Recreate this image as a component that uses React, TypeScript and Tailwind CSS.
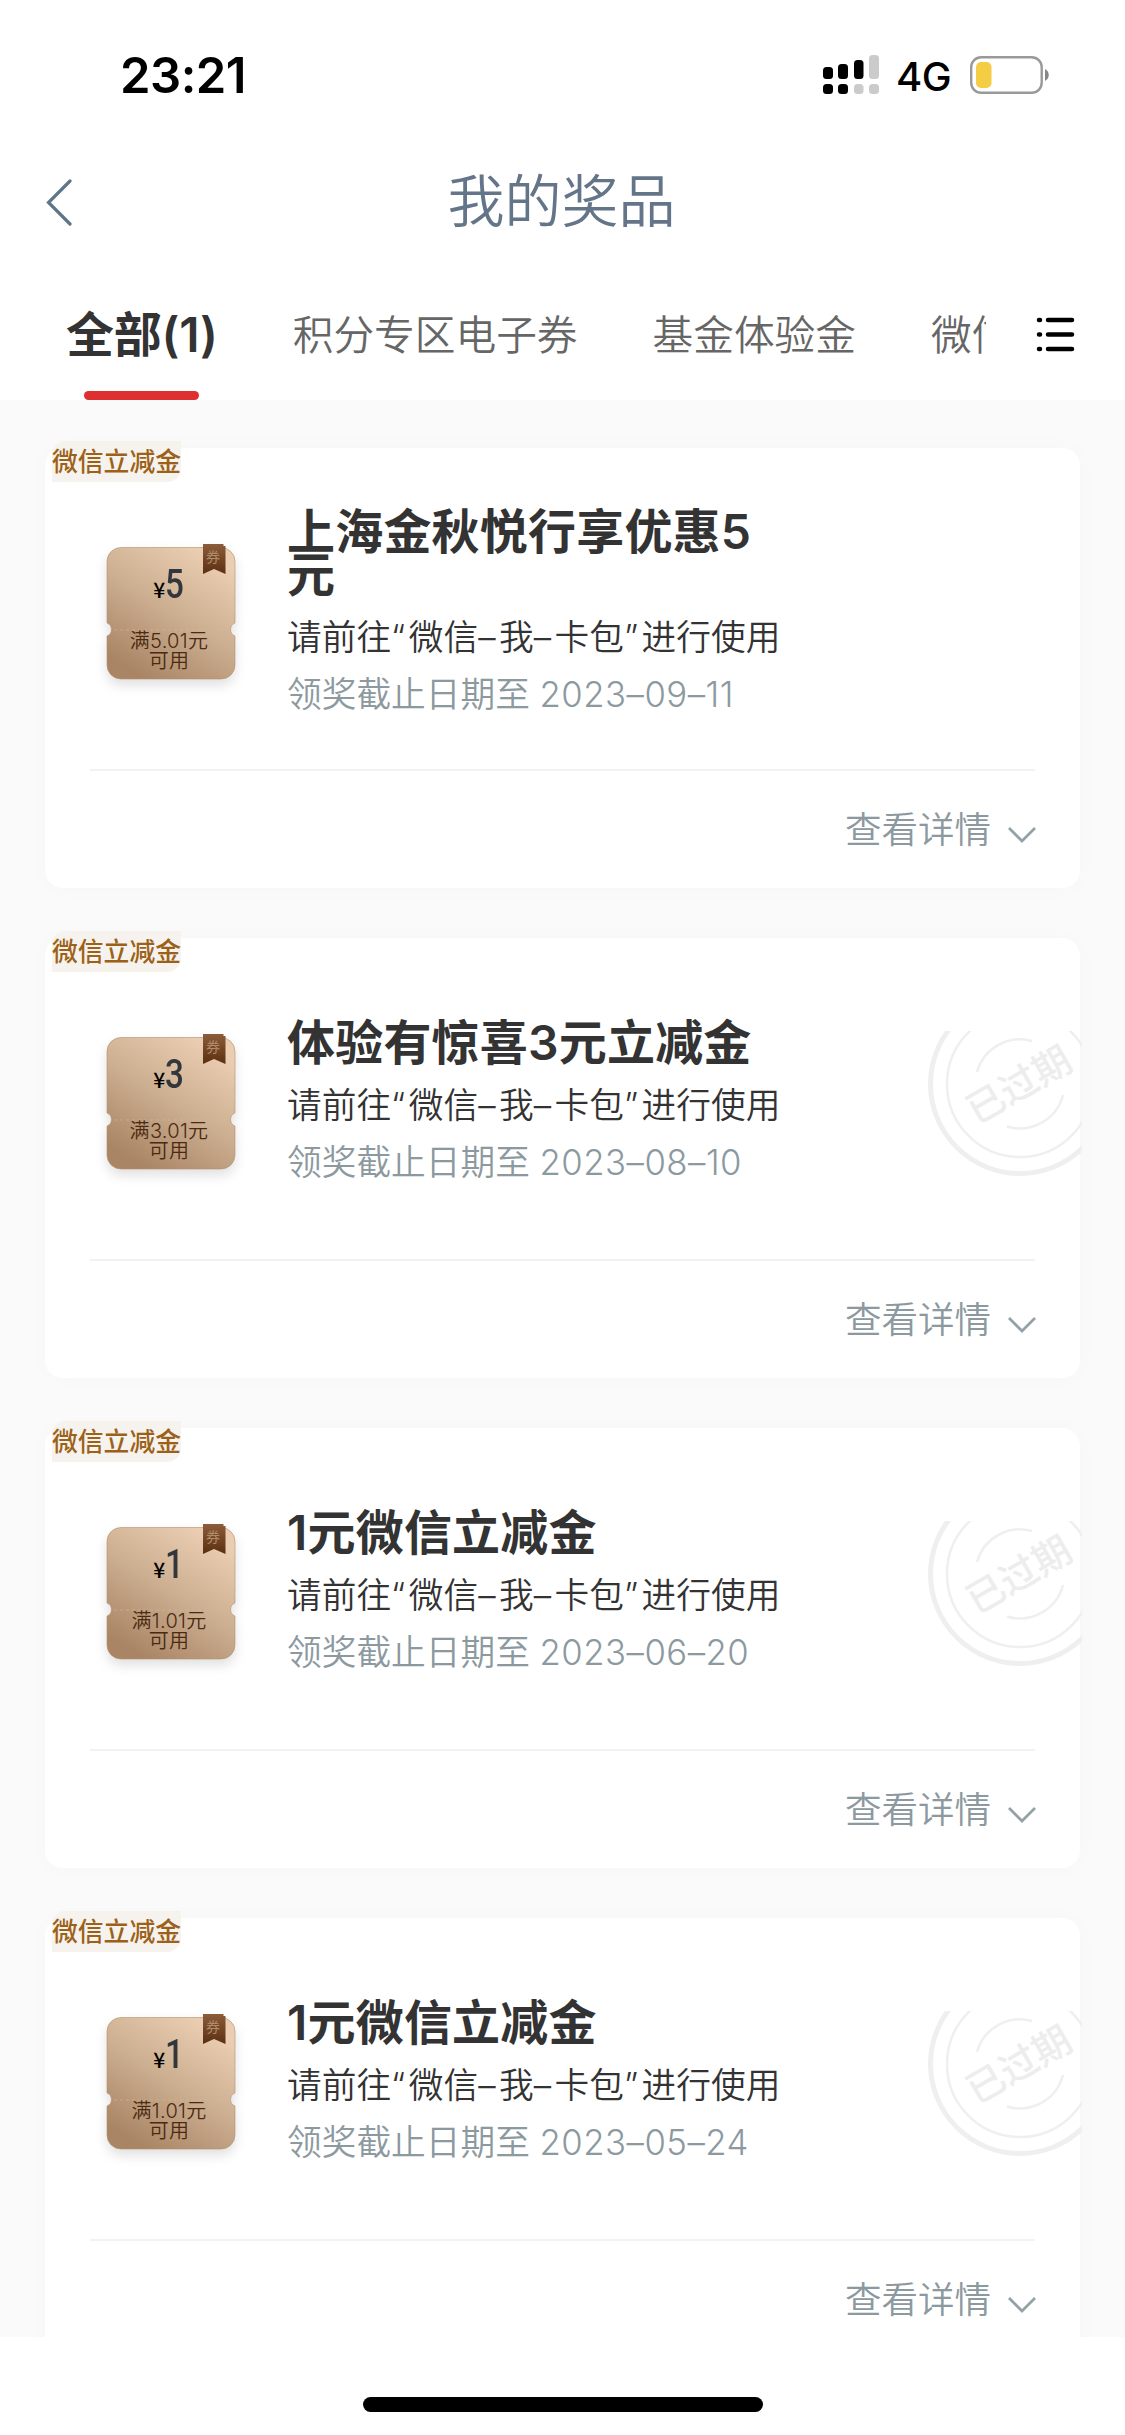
import React, { useState } from 'react';

interface Prize {
    id: number;
    tag: string;
    amount: string;
    threshold: string;
    title: string;
    deadline: string;
    expired: boolean;
}

const prizes: Prize[] = [
    { id: 1, tag: '微信立减金', amount: '5', threshold: '满5.01元', title: '上海金秋悦行享优惠5元', deadline: '2023–09–11', expired: false },
    { id: 2, tag: '微信立减金', amount: '3', threshold: '满3.01元', title: '体验有惊喜3元立减金', deadline: '2023–08–10', expired: true },
    { id: 3, tag: '微信立减金', amount: '1', threshold: '满1.01元', title: '1元微信立减金', deadline: '2023–06–20', expired: true },
    { id: 4, tag: '微信立减金', amount: '1', threshold: '满1.01元', title: '1元微信立减金', deadline: '2023–05–24', expired: true },
];

const tabs = ['全部(1)', '积分专区电子券', '基金体验金', '微信立减金'];

const StatusBar = () => (
    <div className="flex h-[148px] shrink-0 items-center justify-between pl-[120px] pr-[75px] pt-[2px]">
        <span className="text-[49px] font-semibold leading-none tracking-[-0.5px] text-black">23:21</span>
        <div className="flex items-center">
            <svg className="h-10 w-14" viewBox="0 0 56 40">
                <g fill="#000">
                    <rect x="0" y="12" width="10" height="12" rx="3.5" />
                    <rect x="15" y="9" width="10" height="15" rx="3.5" />
                    <rect x="31" y="5" width="9.5" height="19" rx="3.5" />
                    <rect x="0" y="29" width="10" height="10" rx="3.5" />
                    <rect x="15" y="29" width="10" height="10" rx="3.5" />
                </g>
                <g fill="#cbcbcb">
                    <rect x="46" y="0" width="10" height="24" rx="3.5" />
                    <rect x="31" y="29" width="9.5" height="10" rx="3.5" />
                    <rect x="46" y="29" width="10" height="10" rx="3.5" />
                </g>
            </svg>
            <span className="ml-[17px] w-[56px] pt-[3px] text-[40px] font-medium leading-none tracking-[-0.5px] text-black">4G</span>
            <svg className="ml-[18px] h-[38px] w-20" viewBox="0 0 80 38">
                <rect x="1.2" y="1.2" width="70.5" height="35.6" rx="10" fill="none" stroke="#999" strokeWidth="2.4" />
                <rect x="6" y="6" width="15.5" height="26" rx="5" fill="#f5cd45" />
                <path d="M75 13c5 2.500 5 9.500 0 12z" fill="#888" />
            </svg>
        </div>
    </div>
);

const NavBar = () => (
    <div className="grid h-[108px] shrink-0 grid-cols-[1fr_auto_1fr] items-center px-[45px]">
        <svg className="h-12 w-7" viewBox="0 0 28 48" fill="none" stroke="#5f7688" strokeWidth="3.2" strokeLinecap="round">
            <path d="M25 3 3.500 24.500 25 46" />
        </svg>
        <h1 className="-ml-[2px] -mt-[2px] text-[57px] font-[350] leading-none text-[#64758a]">我的奖品</h1>
    </div>
);

const Coupon = ({ amount, threshold }: { amount: string; threshold: string }) => (
    <div className="relative h-[136px] w-[130px] shrink-0">
        <svg className="absolute inset-0 h-full w-full overflow-visible drop-shadow-[0_6px_6px_rgba(0,0,0,0.12)]" viewBox="0 0 130 136">
            <defs>
                <linearGradient id="couponFill" x1="0.85" y1="0.1" x2="0.3" y2="1">
                    <stop offset="0" stopColor="#ebcdb2" />
                    <stop offset="0.5" stopColor="#cbad8f" />
                    <stop offset="1" stopColor="#a98565" />
                </linearGradient>
                <linearGradient id="ribbonFill" x1="0" y1="0" x2="0" y2="1">
                    <stop offset="0" stopColor="#8b5d3b" />
                    <stop offset="1" stopColor="#5a2f10" />
                </linearGradient>
            </defs>
            <path
                d="M15 3.500h100a14 14 0 0 1 14 14V79a7 7 0 0 0 0 13v29a14 14 0 0 1-14 14H15a14 14 0 0 1-14-14V92a7 7 0 0 0 0-13V17.500a14 14 0 0 1 14-14z"
                fill="url(#couponFill)"
                stroke="#b48f6d"
                strokeOpacity="0.6"
            />
            <path d="M8 86h114" stroke="#d8bca0" strokeWidth="1" strokeDasharray="3 3" opacity="0.5" />
            <path d="M97 0h20.500v2h2v28l-11.500-5-11 5V1z" fill="url(#ribbonFill)" />
        </svg>
        <div className="relative flex h-full flex-col items-center">
            <span className="absolute left-[100px] top-[5px] text-[14px] leading-[16px] text-[#b08a6a]">券</span>
            <div className="mt-[21px] flex h-[40px] items-baseline pr-[1px] leading-[40px]">
                <span className="font-['Noto_Sans_CJK_SC',sans-serif] text-[21px] font-medium text-black">¥</span>
                <span className="inline-block origin-left scale-x-[0.83] font-[Roboto] text-[40px] font-medium text-[#33373b]">{amount}</span>
            </div>
            <div className="mt-[26px] pr-[4px] text-center text-[20px] font-[350] leading-[20px] tracking-[0.3px] text-[#4a2a10]">
                <p>{threshold}</p>
                <p>可用</p>
            </div>
        </div>
    </div>
);

const ExpiredStamp = () => (
    <svg className="absolute right-[-2px] top-[93px] h-[146px] w-[155px]" viewBox="0 0 155 146">
        <g fill="none" stroke="#efefef">
            <circle cx="93" cy="53" r="89.500" strokeWidth="5" />
            <circle cx="93" cy="53" r="73" strokeWidth="2.500" />
            <path d="M50 41A44.500 44.500 0 0 1 105 10M136 64A44.500 44.500 0 0 1 80 95.500" strokeWidth="2.500" />
        </g>
        <text x="91" y="67" transform="rotate(-30 92 52)" textAnchor="middle" fontSize="38" fontWeight="500" fill="#ededed">
            已过期
        </text>
    </svg>
);

const PrizeCard = ({ prize }: { prize: Prize }) => (
    <div className="relative h-[440px] shrink-0 rounded-[18px] bg-white shadow-[0_0_24px_rgba(0,0,0,0.02)]">
        <span className="absolute left-[7px] top-[-7px] h-[41px] rounded-br-[14px] rounded-tl-[14px] bg-[#f6f2ed] text-[25.800px] font-medium leading-[41px] text-[#9c6118]">
            {prize.tag}
        </span>
        {prize.expired && <ExpiredStamp />}
        <div className="mx-[45px] flex h-[323px] items-center border-b-2 border-[#f2f2f2] pl-[16px] pt-[7px]">
            <Coupon amount={prize.amount} threshold={prize.threshold} />
            <div className="ml-[51px] pt-[8px]">
                <h2 className="w-[475px] break-all text-[48px] font-semibold leading-[43px] tracking-[0.2px] text-[#333]">{prize.title}</h2>
                <p className="mt-[13px] whitespace-nowrap text-[34.700px] font-[350] leading-[57px] text-[#333]">
                    请前往<span className="tracking-[3.500px]">“</span>微信<span className="tracking-[3.500px]">–</span>我<span className="tracking-[3.500px]">–</span>卡包<span className="tracking-[3.500px]">”</span>进行使用
                </p>
                <p className="whitespace-nowrap text-[34.700px] font-[350] leading-[57px] text-[#8c999f]">
                    领奖截止日期至 <span className="tracking-[0.500px]">{prize.deadline}</span>
                </p>
            </div>
        </div>
        <button className="flex h-[118px] w-full items-center justify-end pr-[43px] text-[36.500px] font-[350] text-[#8c999f]">
            查看详情
            <svg className="ml-[16px] mt-[9px] h-[18px] w-[30px]" viewBox="0 0 30 18" fill="none" stroke="#94a2a8" strokeWidth="2.800">
                <path d="M2 2l13 13L28 2" />
            </svg>
        </button>
    </div>
);

const App = () => {
    const [activeTab, setActiveTab] = useState(0);

    return (
        <div className="flex h-[2435px] w-[1125px] flex-col overflow-hidden bg-white font-[Inter,'Noto_Sans_CJK_SC',sans-serif]">
            <StatusBar />
            <NavBar />
            <div className="flex h-[144px] shrink-0 items-stretch">
                <div className="flex w-[986px] gap-[75px] overflow-hidden pl-[66px]">
                    {tabs.map((tab, index) => (
                        <button
                            key={tab}
                            onClick={() => setActiveTab(index)}
                            className={
                                index === activeTab
                                    ? 'flex shrink-0 flex-col items-center justify-between whitespace-nowrap pt-[44px] text-[48px] font-semibold leading-[70px] tracking-[-0.2px] text-[#333]'
                                    : 'flex shrink-0 flex-col items-center whitespace-nowrap pt-[45px] text-[40.700px] font-[350] leading-[70px] text-[#666]'
                            }
                        >
                            {tab}
                            {index === activeTab && <span className="h-[9px] w-[115px] rounded-full bg-[#de3031]" />}
                        </button>
                    ))}
                </div>
                <svg className="ml-[49px] mt-[59px] h-10 w-10" viewBox="0 0 40 40" stroke="#000" strokeWidth="4.500" strokeLinecap="round">
                    <path d="M13 5h24M13 19.500h24M13 34h24M4 5h1M4 19.500h1M4 34h1" />
                </svg>
            </div>
            <div className="flex h-[1937px] shrink-0 flex-col gap-[50px] overflow-hidden bg-[#fafafa] px-[45px] pt-[48px]">
                {prizes.map(prize => (
                    <PrizeCard key={prize.id} prize={prize} />
                ))}
            </div>
            <div className="flex flex-1 justify-center pt-[60px]">
                <div className="h-[15px] w-[400px] rounded-full bg-black" />
            </div>
        </div>
    );
};

export default App;
